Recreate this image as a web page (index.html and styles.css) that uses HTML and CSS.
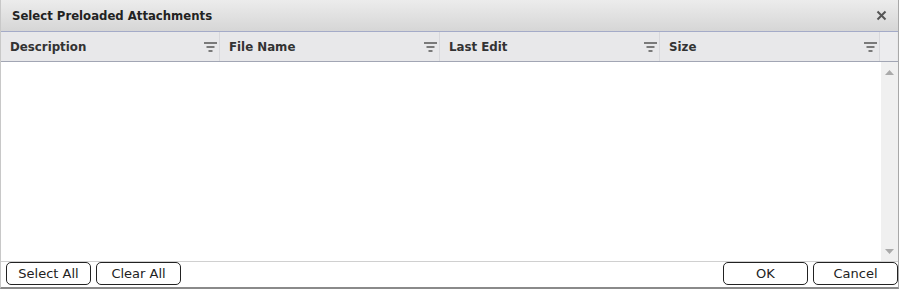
FILE: index.html
```html
<!DOCTYPE html>
<html>
<head>
<meta charset="utf-8">
<link rel="stylesheet" href="styles.css">
</head>
<body>
<div class="dialog">
  <div class="titlebar">
    <span class="title">Select Preloaded Attachments</span>
    <svg class="close" width="11" height="11" viewBox="0 0 11 11"><path d="M1.5 1.5 L9.5 9.5 M9.5 1.5 L1.5 9.5" stroke="#555" stroke-width="2" fill="none"/></svg>
  </div>
  <div class="grid">
    <div class="head">
      <div class="col"><span>Description</span><svg class="filt" width="13" height="10" viewBox="0 0 13 10"><path d="M0 1h13M2.5 5h8M4.5 9h4" stroke="#555" stroke-width="1.4"/></svg></div>
      <div class="col"><span>File Name</span><svg class="filt" width="13" height="10" viewBox="0 0 13 10"><path d="M0 1h13M2.5 5h8M4.5 9h4" stroke="#555" stroke-width="1.4"/></svg></div>
      <div class="col"><span>Last Edit</span><svg class="filt" width="13" height="10" viewBox="0 0 13 10"><path d="M0 1h13M2.5 5h8M4.5 9h4" stroke="#555" stroke-width="1.4"/></svg></div>
      <div class="col"><span>Size</span><svg class="filt" width="13" height="10" viewBox="0 0 13 10"><path d="M0 1h13M2.5 5h8M4.5 9h4" stroke="#555" stroke-width="1.4"/></svg></div>
      <div class="sbhead"></div>
    </div>
    <div class="body">
      <div class="rows"></div>
      <div class="scroll">
        <svg width="9" height="5" viewBox="0 0 9 5"><path d="M0 5L4.5 0L9 5Z" fill="#aaa"/></svg>
        <svg width="9" height="5" viewBox="0 0 9 5"><path d="M0 0L4.5 5L9 0Z" fill="#aaa"/></svg>
      </div>
    </div>
  </div>
  <div class="footer">
    <div class="group">
      <button class="btn">Select All</button>
      <button class="btn">Clear All</button>
    </div>
    <div class="group">
      <button class="btn">OK</button>
      <button class="btn">Cancel</button>
    </div>
  </div>
</div>
</body>
</html>
```
FILE: styles.css
```css
* { box-sizing: border-box; }
html, body { margin: 0; padding: 0; background: #fff; }
body { width: 901px; height: 289px; overflow: hidden; font-family: "DejaVu Sans", Verdana, sans-serif; }
.dialog { width: 899px; height: 289px; border-left: 1px solid #c8c8c8; border-right: 1px solid #a8a8a8; border-bottom: 2px solid #8a8a8a; display: flex; flex-direction: column; }
.titlebar { height: 32px; background: linear-gradient(#ececec, #d6d6d6); display: flex; align-items: center; justify-content: space-between; padding: 0 11px 0 11px; border-bottom: 1px solid #a4abc8; }
.title { font-weight: bold; font-size: 11.7px; color: #222; }
.close { display: block; }
.grid { display: flex; flex-direction: column; }
.head { height: 30px; display: flex; background: #e8e8ea; border-bottom: 1px solid #a2a6b4; }
.col { width: 220px; display: flex; align-items: center; justify-content: space-between; padding: 1px 2px 0 9px; border-right: 1px solid #d8d8dc; font-weight: bold; font-size: 11.8px; color: #333; }
.col:first-child { width: 219px; }
.sbhead { width: 17px; background: #ececee; }
.body { height: 200px; display: flex; border-bottom: 1px solid #d0d0d0; }
.rows { flex: 1; }
.scroll { width: 17px; background: #f0f0f0; display: flex; flex-direction: column; justify-content: space-between; align-items: center; padding: 8px 0 7px; }
.scroll svg { display: block; }
.footer { flex: 1; display: flex; justify-content: space-between; align-items: flex-start; padding: 0 0 0 5px; }
.group { display: flex; gap: 5px; }
.btn { width: 85px; height: 23px; border: 1px solid #222; border-radius: 5px; background: #fff; font-family: "DejaVu Sans", Verdana, sans-serif; font-size: 13px; color: #222; padding: 0; }
```
